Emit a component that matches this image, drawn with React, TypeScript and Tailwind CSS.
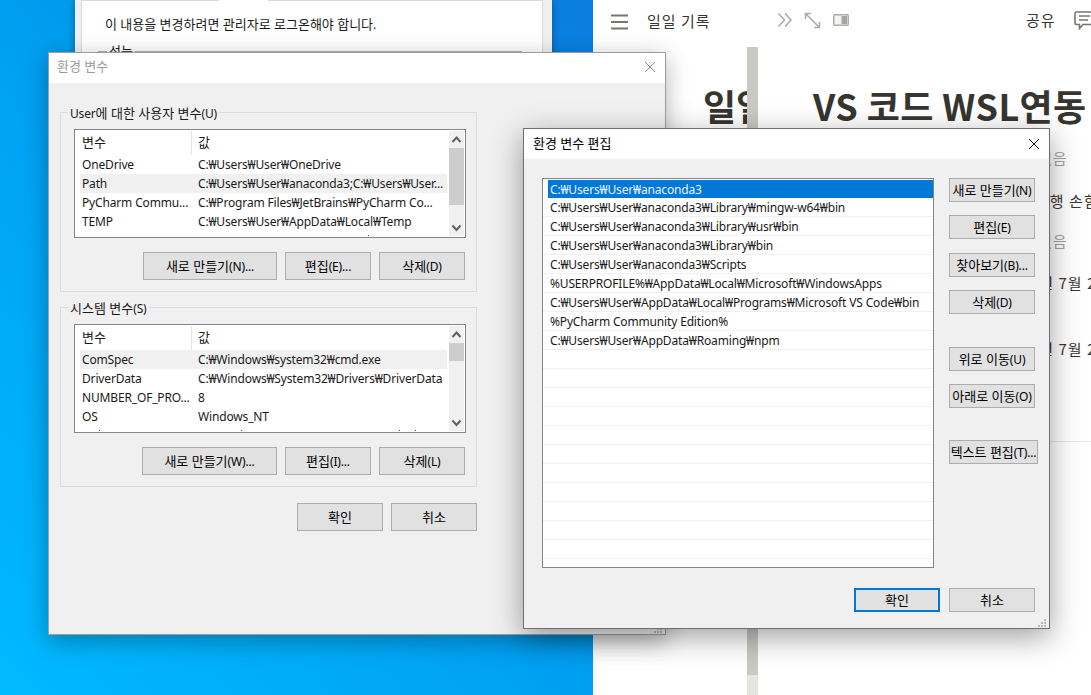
import React from "react";

function T({ s }: { s: string }) {
  const parts = s.split(/([가-힣]+(?: [가-힣]+)*)/);
  return (
    <>
      {parts.map((p, i) =>
        /[가-힣]/.test(p) ? (
          <span key={i} className="text-[13px] tracking-normal">
            {p}
          </span>
        ) : (
          <span key={i}>{p}</span>
        )
      )}
    </>
  );
}

function Btn({ label, w, extra }: { label: string; w: string; extra?: string }) {
  return (
    <div
      className={`${w} ${extra ?? "border border-[#adadad]"} shrink-0 bg-[#e1e1e1] flex items-center justify-center whitespace-nowrap text-[12px] leading-none text-black`}
    >
      <div>
        <T s={label} />
      </div>
    </div>
  );
}

function Chevron({ up }: { up?: boolean }) {
  return (
    <svg width="15" height="17" viewBox="0 0 15 17" className="shrink-0">
      <path
        d={up ? "M3.5 11 L7.5 6.5 L11.5 11" : "M3.5 6.5 L7.5 11 L11.5 6.5"}
        fill="none"
        stroke="#606060"
        strokeWidth="2"
      />
    </svg>
  );
}

function Grip({ color }: { color: string }) {
  const pts = [
    [6, 0],
    [3, 3],
    [6, 3],
    [0, 6],
    [3, 6],
    [6, 6],
  ];
  return (
    <svg width="8" height="8" viewBox="0 0 8 8">
      {pts.map(([x, y], i) => (
        <rect key={i} x={x} y={y} width="2" height="2" fill={color} />
      ))}
    </svg>
  );
}

type Row = [string, string];

function VarList({
  rows,
  active,
  thumb,
  dots,
}: {
  rows: Row[];
  active: number;
  thumb: string;
  dots: number[];
}) {
  return (
    <div className="ml-[13px] mt-[16px] w-[392px] h-[109px] border border-[#82878f] bg-white flex overflow-hidden">
      <div className="w-[367px] ml-[5px] shrink-0 flex flex-col">
        <div className="h-[25px] shrink-0 flex items-center">
          <div className="w-[112px] h-[24px] border-r border-[#e5e5e5] pl-[2px] flex items-center">
            <div>
              <T s="변수" />
            </div>
          </div>
          <div className="pl-[6px]">
            <T s="값" />
          </div>
        </div>
        {rows.map(([a, b], i) => (
          <div
            key={a}
            className={`h-[19px] shrink-0 flex items-center whitespace-nowrap ${i === active ? "bg-[#f0f0f0]" : ""}`}
          >
            <div className="w-[118px] pl-[2px] shrink-0">{a}</div>
            <div>{b}</div>
          </div>
        ))}
        <div className="relative h-[5px]">
          {dots.map((d) => (
            <span key={d} className="absolute top-[4px] w-[1px] h-[1px] bg-[#555]" style={{ left: d }} />
          ))}
        </div>
      </div>
      <div className="ml-[2px] my-[1px] w-[15px] shrink-0 bg-[#f0f0f0] flex flex-col">
        <Chevron up />
        <div className="flex-1">
          <div className={`${thumb} bg-[#cdcdcd]`} />
        </div>
        <Chevron />
      </div>
    </div>
  );
}

function Group({ title, children }: { title: string; children: React.ReactNode }) {
  return (
    <div className="relative w-[417px] h-[180px] border border-[#dcdcdc]">
      <div className="absolute left-[7px] -top-[8px] bg-[#f0f0f0] px-[2px] text-[12px] leading-[16px] whitespace-nowrap">
        <T s={title} />
      </div>
      {children}
    </div>
  );
}

const pathRows = [
  "C:₩Users₩User₩anaconda3",
  "C:₩Users₩User₩anaconda3₩Library₩mingw-w64₩bin",
  "C:₩Users₩User₩anaconda3₩Library₩usr₩bin",
  "C:₩Users₩User₩anaconda3₩Library₩bin",
  "C:₩Users₩User₩anaconda3₩Scripts",
  "%USERPROFILE%₩AppData₩Local₩Microsoft₩WindowsApps",
  "C:₩Users₩User₩AppData₩Local₩Programs₩Microsoft VS Code₩bin",
  "%PyCharm Community Edition%",
  "C:₩Users₩User₩AppData₩Roaming₩npm",
  ...Array.from({ length: 11 }, () => ""),
];

function Close({ color }: { color: string }) {
  return (
    <svg width="12" height="12" viewBox="0 0 12 12">
      <path d="M1 1 L11 11 M11 1 L1 11" stroke={color} strokeWidth="1" fill="none" />
    </svg>
  );
}

function Notion() {
  return (
    <div className="flex-1 bg-white flex tracking-normal [font-family:'Noto_Sans_CJK_KR',sans-serif] text-[#37352f]">
      <div className="w-[154px] shrink-0 overflow-hidden">
        <div className="h-[47px] flex items-center pl-[18px] pb-[4px]">
          <svg width="17" height="16" viewBox="0 0 17 16" className="shrink-0">
            <path d="M0 1.5 H17 M0 8 H17 M0 14.5 H17" stroke="#77766f" strokeWidth="2.2" fill="none" />
          </svg>
          <span className="ml-[19px] text-[15px] tracking-[1px] whitespace-nowrap">일일 기록</span>
        </div>
        <div className="mt-[34px] h-[48px] pl-[110px] flex items-center text-[36px] leading-none font-bold whitespace-nowrap">
          일일 기록
        </div>
      </div>
      <div className="w-[11px] shrink-0 flex flex-col">
        <div className="h-[47px] bg-white" />
        <div className="h-[628px] bg-[#c9c8c3]" />
        <div className="flex-1 bg-[#e5e4df]" />
      </div>
      <div className="flex-1 overflow-hidden min-w-0">
        <div className="h-[47px] flex items-center pb-[7px] pl-[19px]">
          <svg width="16" height="16" viewBox="0 0 16 16" className="shrink-0">
            <path d="M1.5 1.5 L7.5 8 L1.5 14.5 M8 1.5 L14 8 L8 14.5" stroke="#ababa8" strokeWidth="1.6" fill="none" />
          </svg>
          <svg width="17" height="17" viewBox="0 0 17 17" className="shrink-0 ml-[11px]">
            <path
              d="M2 2 L15 15 M1.5 7 V1.5 H7 M15.5 10 V15.5 H10"
              stroke="#ababa8"
              strokeWidth="1.6"
              fill="none"
            />
          </svg>
          <svg width="16" height="12" viewBox="0 0 16 12" className="shrink-0 ml-[12px]">
            <rect x="0.75" y="0.75" width="14.5" height="10.5" rx="1" stroke="#ababa8" strokeWidth="1.5" fill="#f4f4f3" />
            <rect x="8.5" y="2" width="5.5" height="8" fill="#a5a5a2" />
          </svg>
          <span className="ml-[177px] text-[15px] tracking-[1px] whitespace-nowrap">공유</span>
          <svg width="18" height="19" viewBox="0 0 18 19" className="shrink-0 ml-[18px]">
            <path
              d="M2.5 1 H18 V13.5 H9 L5.5 17.5 V13.5 H2.5 Q1 13.5 1 12 V2.5 Q1 1 2.5 1 Z M5 5 H16 M5 9 H14"
              stroke="#77766f"
              strokeWidth="1.6"
              fill="none"
            />
          </svg>
        </div>
        <div className="mt-[34px] h-[48px] pl-[55px] flex items-center text-[36px] tracking-[0.4px] leading-none font-bold whitespace-nowrap">
          VS 코드 WSL연동
        </div>
        <div className="mt-[17px] h-[24px] pl-[280px] flex items-center text-[15px] tracking-[1px] text-[#a6a5a1] whitespace-nowrap">
          없음
        </div>
        <div className="mt-[19px] h-[24px] pl-[277px] flex items-center text-[15px] tracking-[1px] whitespace-nowrap">
          이행 손힘
        </div>
        <div className="mt-[16px] h-[24px] pl-[280px] flex items-center text-[15px] tracking-[1px] text-[#a6a5a1] whitespace-nowrap">
          없음
        </div>
        <div className="mt-[18px] h-[24px] pl-[244px] flex items-center text-[15px] tracking-[1px] whitespace-nowrap">
          2022년 7월 21일
        </div>
        <div className="mt-[42px] h-[24px] pl-[244px] flex items-center text-[15px] tracking-[1px] whitespace-nowrap">
          2022년 7월 21일
        </div>
        <div className="mt-[80px] h-[1px] bg-[#e9e9e7]" />
      </div>
    </div>
  );
}

export default function App() {
  return (
    <div className="relative w-[1091px] h-[695px] overflow-hidden flex tracking-[-0.16px] [font-family:'Noto_Sans','Noto_Sans_CJK_KR',sans-serif] text-[12px] text-[#1a1a1a]">
      <div className="w-[593px] shrink-0 bg-[linear-gradient(to_top_right,#00baff_0%,#009ef0_50%,#0a7de0_100%)]" />
      <Notion />

      {/* system properties window behind */}
      <div className="absolute left-[75px] top-0 w-[477px] h-[60px] bg-[#f0f0f0] pl-[6px] pr-[9px] shadow-[0_0_8px_rgba(0,0,0,0.35)]">
        <div className="relative h-[60px] border-x border-t border-[#d9d9d9] bg-white pl-[23px] pt-[14px]">
          <div className="absolute left-[137px] -top-[1px] w-[49px] h-[1px] bg-white" />
          <div className="leading-[18px] whitespace-nowrap">
            <T s="이 내용을 변경하려면 관리자로 로그온해야 합니다." />
          </div>
          <div className="absolute left-[16px] right-[20px] top-[50px] h-[2px] bg-[#b4b4b4]" />
          <div className="absolute left-[25px] top-[41px] bg-white px-[2px] leading-[18px]">
            <T s="성능" />
          </div>
        </div>
      </div>

      {/* environment variables window */}
      <div className="absolute left-[48px] top-[52px] w-[618px] h-[583px] border border-[#9c9c9c] bg-[#f0f0f0] shadow-[0_6px_22px_rgba(0,0,0,0.3)] flex flex-col">
        <div className="h-[30px] bg-white shrink-0 flex items-center justify-between pl-[8px] pr-[9px] pb-[3px] text-[#9a9a9a]">
          <div>
            <T s="환경 변수" />
          </div>
          <Close color="#8f8f8f" />
        </div>
        <div className="pl-[11px] pt-[29px]">
          <Group title="User에 대한 사용자 변수(U)">
            <VarList
              active={1}
              thumb="h-[57px]"
              dots={[288]}
              rows={[
                ["OneDrive", "C:₩Users₩User₩OneDrive"],
                ["Path", "C:₩Users₩User₩anaconda3;C:₩Users₩User..."],
                ["PyCharm Commu...", "C:₩Program Files₩JetBrains₩PyCharm Co..."],
                ["TEMP", "C:₩Users₩User₩AppData₩Local₩Temp"],
              ]}
            />
            <div className="mt-[14px] pr-[11px] flex justify-end gap-[8px] h-[28px]">
              <Btn w="w-[134px]" label="새로 만들기(N)..." />
              <Btn w="w-[86px]" label="편집(E)..." />
              <Btn w="w-[86px]" label="삭제(D)" />
            </div>
          </Group>
          <div className="h-[15px]" />
          <Group title="시스템 변수(S)">
            <VarList
              active={0}
              thumb="h-[18px]"
              dots={[19, 161, 319, 335]}
              rows={[
                ["ComSpec", "C:₩Windows₩system32₩cmd.exe"],
                ["DriverData", "C:₩Windows₩System32₩Drivers₩DriverData"],
                ["NUMBER_OF_PRO...", "8"],
                ["OS", "Windows_NT"],
              ]}
            />
            <div className="mt-[14px] pr-[11px] flex justify-end gap-[8px] h-[28px]">
              <Btn w="w-[135px]" label="새로 만들기(W)..." />
              <Btn w="w-[86px]" label="편집(I)..." />
              <Btn w="w-[86px]" label="삭제(L)" />
            </div>
          </Group>
          <div className="mt-[16px] w-[417px] flex justify-end gap-[8px] h-[28px]">
            <Btn w="w-[86px]" label="확인" />
            <Btn w="w-[86px]" label="취소" />
          </div>
        </div>
        <div className="absolute right-[3px] bottom-[1px]">
          <Grip color="#b8b8b8" />
        </div>
      </div>

      {/* edit window */}
      <div className="absolute left-[523px] top-[128px] w-[527px] h-[501px] border border-[#6f6f6f] bg-[#f0f0f0] shadow-[0_8px_28px_rgba(0,0,0,0.38)] flex flex-col">
        <div className="h-[30px] bg-white shrink-0 flex items-center justify-between px-[9px] pb-[1px] text-black">
          <div>
            <T s="환경 변수 편집" />
          </div>
          <Close color="#111" />
        </div>
        <div className="flex pl-[18px] pt-[19px]">
          <div className="w-[392px] h-[390px] border border-[#82878f] bg-white flex flex-col overflow-hidden shrink-0">
            {pathRows.map((r, i) => (
              <div
                key={i}
                className={
                  i === 0
                    ? "ml-[5px] pl-[2px] pt-[1px] mt-[1px] h-[18px] shrink-0 whitespace-nowrap flex items-center bg-[#0078d7] text-[#e8f3fc]"
                    : "h-[19px] pl-[7px] pt-[2px] shrink-0 whitespace-nowrap flex items-center border-b border-[#f0f0f0]"
                }
              >
                {r}
              </div>
            ))}
          </div>
          <div className="ml-[15px] flex flex-col">
            <Btn w="w-[86px] h-[24px]" label="새로 만들기(N)" />
            <Btn w="w-[86px] h-[24px] mt-[13px]" label="편집(E)" />
            <Btn w="w-[86px] h-[24px] mt-[14px]" label="찾아보기(B)..." />
            <Btn w="w-[86px] h-[24px] mt-[13px]" label="삭제(D)" />
            <Btn w="w-[86px] h-[24px] mt-[33px]" label="위로 이동(U)" />
            <Btn w="w-[86px] h-[24px] mt-[13px]" label="아래로 이동(O)" />
            <Btn w="w-[89px] h-[24px] mt-[32px]" label="텍스트 편집(T)..." />
          </div>
        </div>
        <div className="mt-[20px] pr-[14px] flex justify-end gap-[9px]">
          <Btn w="w-[86px] h-[24px]" extra="border-2 border-[#0078d7]" label="확인" />
          <Btn w="w-[86px] h-[24px]" label="취소" />
        </div>
        <div className="absolute right-[3px] bottom-[1px]">
          <Grip color="#b8b8b8" />
        </div>
      </div>
    </div>
  );
}
